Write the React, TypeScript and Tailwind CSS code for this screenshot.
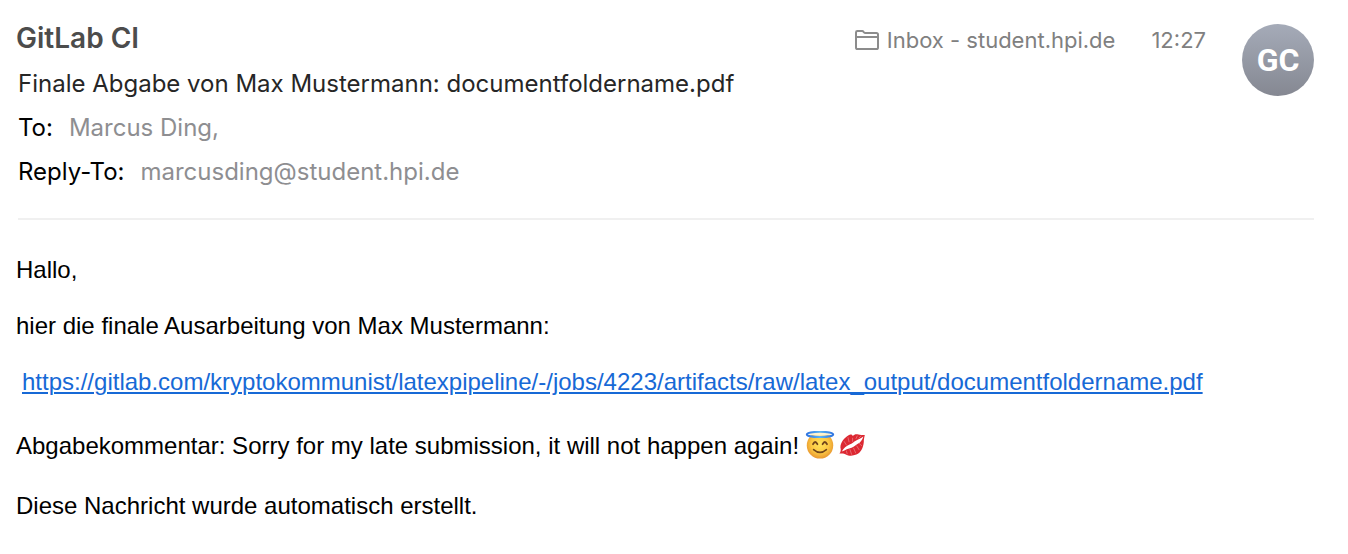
import React from "react";

function FolderIcon() {
  return (
    <svg width="24" height="20" viewBox="0 0 24 20" fill="none" stroke="#8c8c8c" strokeWidth="2" aria-hidden="true">
      <path d="M1 17V2.4Q1 1 2.4 1H7.2Q8 1 8.5 1.8L9 2.4Q9.5 3 10.4 3H21.4Q23 3 23 4.6V17.4Q23 19 21.4 19H2.6Q1 19 1 17.4Z" />
      <path d="M1 7H23" />
    </svg>
  );
}

function HaloFace() {
  return (
    <svg role="img" aria-label="Smiling face with halo" width="30" height="30" viewBox="0 0 30 30">
      <defs>
        <radialGradient id="skin" cx="0.5" cy="0.45" r="0.56">
          <stop offset="0" stopColor="#ffe25a" />
          <stop offset="0.6" stopColor="#fbc843" />
          <stop offset="1" stopColor="#e8952f" />
        </radialGradient>
        <linearGradient id="halo" x1="0" y1="0" x2="1" y2="0">
          <stop offset="0" stopColor="#2f74e0" />
          <stop offset="0.5" stopColor="#58b4f5" />
          <stop offset="1" stopColor="#2f74e0" />
        </linearGradient>
      </defs>
      <circle cx="15" cy="14.4" r="13.2" fill="url(#skin)" />
      <ellipse cx="15" cy="3" rx="11" ry="1.8" fill="#fdf3cf" />
      <ellipse cx="15" cy="3.4" rx="13.2" ry="2.6" fill="none" stroke="url(#halo)" strokeWidth="2" />
      <path d="M8 13.2Q10.2 8.8 12.4 13.2M17.6 13.2Q19.8 8.8 22 13.2" fill="none" stroke="#70441a" strokeWidth="1.8" strokeLinecap="round" />
      <path d="M8.6 18.6Q15 24.2 21.4 18.6" fill="none" stroke="#70441a" strokeWidth="1.6" strokeLinecap="round" />
    </svg>
  );
}

function KissMark() {
  return (
    <svg role="img" aria-label="Kiss mark" width="26" height="26" viewBox="0 0 26 26">
      <path d="M1.4 14.4C1.4 9.4 5.5 4.4 9.6 2.2C11.4 1.2 13 1.5 13.8 3C15.4 1 17.6 1 19.4 1.6C21.6 2.4 23.4 1.8 25.8 2C25 5.4 24.8 6.8 24.8 9C24.4 14.6 21.8 19.8 17.4 21.6C13.6 23.2 9.4 23 6.8 21.4C4.4 20 3 20.4.4 20.6C2 18.6 2 16.4 1.4 14.4Z" fill="#dc2832" />
      <path d="M2.8 18.6C4.4 15 7.4 12.8 10.6 11.4C13.2 10.6 14.6 8.6 17.2 7.4C19.8 6.2 21.8 5 24.4 3.4C23.2 7 21.4 9.4 18.8 10.8C16.6 12 15.6 13.8 12.6 14.8C9.2 15.6 6.4 17 2.8 18.6Z" fill="#fff" />
      <g stroke="#fff" strokeWidth="0.6" strokeLinecap="round" opacity="0.5">
        <path d="M5.2 8.6L7.4 12M9 4.6L10 8.8M13.6 5.2V8.4M18.2 3L17 5.6M22 3L20 5" />
        <path d="M7.4 18L8.2 20.8M11 16.6L12.6 21.4M14.6 15.2L16.6 19.8M17.8 13L20 16.6M20.4 10.6L22.8 12.8" />
      </g>
    </svg>
  );
}

const LINK =
  "https://gitlab.com/kryptokommunist/latexpipeline/-/jobs/4223/artifacts/raw/latex_output/documentfoldername.pdf";

export default function App() {
  return (
    <article className="min-h-screen bg-white pb-8 pl-4 pr-[34px] pt-5 text-2xl text-black">
      <header className="font-['Inter',sans-serif]">
        <div className="flex items-start justify-between">
          <div className="min-w-0">
            <h1 className="text-[28px] font-semibold leading-9 text-[#4c4c4c]">GitLab CI</h1>
            <div className="mt-1.5 pl-0.5 leading-[44px]">
              <h2 className="text-[#262626]">Finale Abgabe von Max Mustermann: documentfoldername.pdf</h2>
              <dl>
                <div className="flex gap-4">
                  <dt>To:</dt>
                  <dd className="text-[#8e8e91]">Marcus Ding,</dd>
                </div>
                <div className="flex gap-4">
                  <dt>Reply-To:</dt>
                  <dd className="text-[#8e8e91]">marcusding@student.hpi.de</dd>
                </div>
              </dl>
            </div>
          </div>
          <div className="flex shrink-0 items-start pt-1 text-[22px] leading-8 text-[#808080]">
            <div className="flex items-center gap-2">
              <FolderIcon />
              <span>Inbox - student.hpi.de</span>
            </div>
            <time className="ml-9">12:27</time>
            <div className="ml-9 flex size-[72px] items-center justify-center rounded-full bg-linear-to-b from-[#a5abb8] to-[#858892] font-['Roboto',sans-serif] text-[32px] font-bold text-white">
              GC
            </div>
          </div>
        </div>
        <hr className="ml-0.5 mt-6 border-0 border-t-2 border-[#f0f0f0]" />
      </header>
      <section className="pt-9 font-['Liberation_Sans',Arial,sans-serif] leading-7">
        <p>Hallo,</p>
        <p className="mt-7">hier die finale Ausarbeitung von Max Mustermann:</p>
        <p className="mt-7 pl-1.5">
          <a href={LINK} className="break-words text-[#1769d6] underline decoration-2 underline-offset-2">
            {LINK}
          </a>
        </p>
        <div className="mt-9 flex h-7 items-center">
          <p>Abgabekommentar: Sorry for my late submission, it will not happen again!</p>
          <span className="ml-1.5 flex items-center gap-1">
            <HaloFace />
            <KissMark />
          </span>
        </div>
        <p className="mt-8">Diese Nachricht wurde automatisch erstellt.</p>
      </section>
    </article>
  );
}
